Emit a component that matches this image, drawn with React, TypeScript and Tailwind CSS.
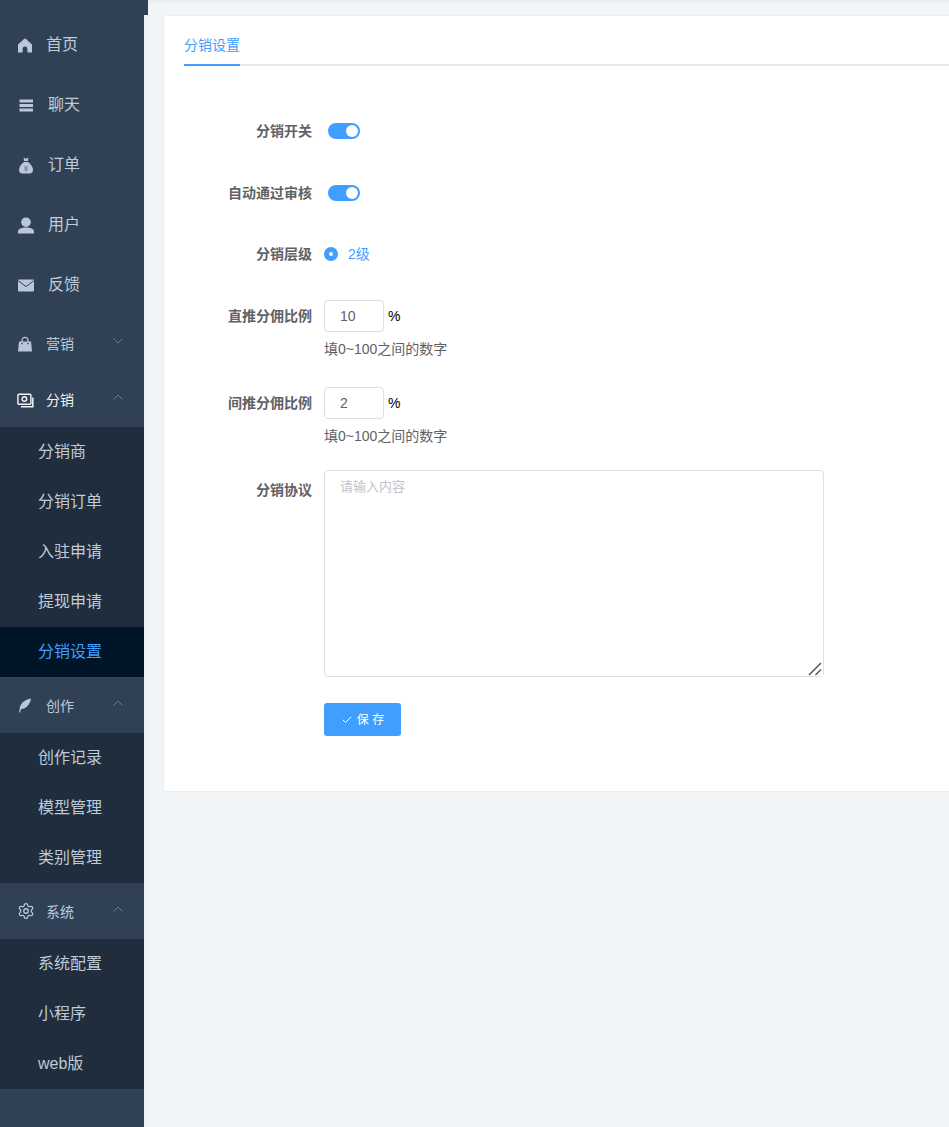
import React from 'react';
import { Check, Settings } from 'lucide-react';

const dark = '#304156';

const HomeIcon = () => (
  <svg width="17" height="17" viewBox="0 0 17 17" fill="#b9c7d8">
    <path d="M8 1.5 C8.4 1.5 8.7 1.7 9 2 L15 7.6 V15.5 H10.4 V11.8 A2.4 2.4 0 0 0 5.6 11.8 V15.5 H1 V7.6 L7 2 C7.3 1.7 7.6 1.5 8 1.5 Z" />
  </svg>
);

const ListIcon = () => (
  <svg width="17" height="17" viewBox="0 0 17 17" fill="#b9c7d8">
    <rect x="2.5" y="2.5" width="13.5" height="3" />
    <rect x="2.5" y="7" width="13.5" height="3" />
    <rect x="2.5" y="11.5" width="13.5" height="3" />
  </svg>
);

const MoneyBagIcon = () => (
  <svg width="17" height="17" viewBox="0 0 17 17" fill="#b9c7d8">
    <path d="M6.6 0.6 L9 1.8 L11.4 0.6 L11 4 H7 Z" />
    <path d="M7 5 H11 C14 7 16 10 16 13 C16 15.5 14.5 16.5 12.5 16.5 H5.5 C3.5 16.5 2 15.5 2 13 C2 10 4 7 7 5 Z" />
    <path d="M7.2 8.5 L9 10.6 L10.8 8.5 M7.2 11 H10.8 M7.2 12.8 H10.8 M9 10.6 V14.5" stroke="#6f7f92" strokeWidth="0.9" fill="none" />
  </svg>
);

const UserIcon = () => (
  <svg width="17" height="17" viewBox="0 0 17 17" fill="#b9c7d8">
    <circle cx="9" cy="5.2" r="4.8" />
    <path d="M1 16.5 V14.6 C1 11.8 5 10.6 9 10.6 C13 10.6 17 11.8 17 14.6 V16.5 Z" />
  </svg>
);

const MailIcon = () => (
  <svg width="17" height="17" viewBox="0 0 17 17">
    <rect x="1" y="2.5" width="16" height="12" rx="0.8" fill="#b9c7d8" />
    <path d="M1.2 3.6 L9 9.6 L16.8 3.6" stroke={dark} strokeWidth="1" fill="none" />
  </svg>
);

const BagIcon = () => (
  <svg width="17" height="17" viewBox="0 0 17 17">
    <path d="M2 6.5 H14 L15 16.5 H1 Z" fill="#b9c7d8" />
    <path d="M5 8.5 V5.4 A3 3 0 0 1 11 5.4 V8.5" stroke="#b9c7d8" strokeWidth="1.2" fill="none" />
    <circle cx="5" cy="8.6" r="0.8" fill={dark} />
    <circle cx="11" cy="8.6" r="0.8" fill={dark} />
  </svg>
);

const CashIcon = () => (
  <svg width="17" height="17" viewBox="0 0 17 17" fill="none" stroke="#f4f4f5" strokeWidth="1.4">
    <rect x="0.9" y="3.2" width="13" height="10" rx="1" />
    <circle cx="7.4" cy="8" r="2.3" />
    <path d="M15.8 6.5 V15.8 H4" strokeWidth="1.5" />
  </svg>
);

const FeatherIcon = () => (
  <svg width="17" height="17" viewBox="0 0 17 17" fill="#b9c7d8">
    <path d="M14 1.5 C8.5 2.5 4 5.5 3 10 L2 15.5 H3 L4.2 12 C9 12 13 7.5 14 1.5 Z" />
  </svg>
);

const GearIcon = () => (
  <div className="flex h-[17px] w-[17px] items-center justify-center">
    <Settings size={18} strokeWidth={1.7} color="#b9c7d8" className="shrink-0" />
  </div>
);

const Chevron = ({ up }: { up?: boolean }) => (
  <svg width="10" height="6" viewBox="0 0 10 6" fill="none" stroke="#6d7a8b" strokeWidth="1" className="absolute left-[113px] top-[23px]">
    <path d={up ? 'M0.5 5.5 L5 1 L9.5 5.5' : 'M0.5 0.5 L5 5 L9.5 0.5'} />
  </svg>
);

const topItems = [
  { label: '首页', icon: <HomeIcon />, gap: 'ml-[12px]' },
  { label: '聊天', icon: <ListIcon />, gap: 'ml-[14px]' },
  { label: '订单', icon: <MoneyBagIcon />, gap: 'ml-[14px]' },
  { label: '用户', icon: <UserIcon />, gap: 'ml-[14px]' },
  { label: '反馈', icon: <MailIcon />, gap: 'ml-[14px]' },
];

const groups = [
  { label: '营销', icon: <BagIcon />, children: [] as string[] },
  { label: '分销', icon: <CashIcon />, active: true, children: ['分销商', '分销订单', '入驻申请', '提现申请', '分销设置'] },
  { label: '创作', icon: <FeatherIcon />, children: ['创作记录', '模型管理', '类别管理'] },
  { label: '系统', icon: <GearIcon />, children: ['系统配置', '小程序', 'web版'] },
];

const Sidebar = () => (
  <aside className="w-[144px] shrink-0 bg-[#304156] pt-[15px] text-[#bfcbd9]">
    {topItems.map(item => (
      <div key={item.label} className="flex h-[60px] items-center pl-[17px] text-base">
        {item.icon}
        <span className={item.gap}>{item.label}</span>
      </div>
    ))}
    {groups.map(group => (
      <div key={group.label}>
        <div className="relative flex h-[56px] items-center pl-[17px] text-sm">
          {group.icon}
          <span className={`ml-[12px] translate-y-px ${group.active ? 'text-[#f4f4f5]' : ''}`}>{group.label}</span>
          <Chevron up={group.children.length > 0} />
        </div>
        {group.children.map(child => (
          <div
            key={child}
            className={`flex h-[50px] items-center pl-[38px] text-base ${child === '分销设置' ? 'bg-[#001528] text-[#409eff]' : 'bg-[#1f2d3d]'}`}
          >
            {child}
          </div>
        ))}
      </div>
    ))}
  </aside>
);

const Field = ({ label, className, labelClass = 'h-[32px] leading-[32px]', children }: { label: string; className: string; labelClass?: string; children: React.ReactNode }) => (
  <div className={`flex ${className}`}>
    <label className={`w-[148px] text-right text-sm font-bold text-[#606266] ${labelClass}`}>{label}</label>
    <div className="ml-[12px]">{children}</div>
  </div>
);

const Toggle = () => (
  <div className="flex h-[32px] items-center pl-[4px]">
    <div className="flex h-[16px] w-[32px] items-center justify-end rounded-full bg-[#409eff] pr-[2px]">
      <div className="h-[12px] w-[12px] rounded-full bg-white" />
    </div>
  </div>
);

const Percent = ({ value }: { value: string }) => (
  <div>
    <div className="flex h-[32px] items-center">
      <input
        defaultValue={value}
        className="h-[32px] w-[60px] rounded border border-[#dcdfe6] pl-[15px] text-sm text-[#606266] outline-none"
      />
      <span className="ml-[4px] text-sm text-black">%</span>
    </div>
    <div className="mt-[6px] text-sm leading-[22px] text-[#606266]">填0~100之间的数字</div>
  </div>
);

export default function App() {
  return (
    <div className="relative flex h-[1127px] overflow-hidden bg-[#f2f5f8] font-['Liberation_Sans','Noto_Sans_CJK_SC',sans-serif]">
      <Sidebar />
      <main className="relative flex-1 pl-[19px] pt-[15px]">
        <div className="absolute left-0 top-0 h-[15px] w-[4px] bg-[#304156]" />
        <div className="absolute bottom-0 left-0 top-[15px] w-[4px] bg-[#eef0f3]" />
        <div className="absolute left-[4px] right-0 top-0 h-[4px] bg-gradient-to-b from-[#e9ecf0] to-[#f2f5f8]" />
        <div className="relative h-[777px] w-[900px] border border-[#ebeef5] bg-white">
          <div className="mx-[20px] flex h-[50px] border-b-2 border-[#e4e7ed]">
            <div className="-mb-[2px] w-[56px] border-b-2 border-[#409eff] pt-[18px] text-sm leading-[22px] text-[#409eff]">分销设置</div>
          </div>
          <Field label="分销开关" className="mt-[49px]">
            <Toggle />
          </Field>
          <Field label="自动通过审核" className="mt-[30px]">
            <Toggle />
          </Field>
          <Field label="分销层级" className="mt-[29px]">
            <div className="flex h-[32px] items-center">
              <div className="flex h-[14px] w-[14px] items-center justify-center rounded-full bg-[#409eff]">
                <div className="h-[4px] w-[4px] rounded-full bg-white" />
              </div>
              <span className="ml-[10px] text-sm text-[#409eff]">2级</span>
            </div>
          </Field>
          <Field label="直推分佣比例" className="mt-[30px]">
            <Percent value="10" />
          </Field>
          <Field label="间推分佣比例" className="mt-[27px]">
            <Percent value="2" />
          </Field>
          <Field label="分销协议" className="mt-[23px]" labelClass="h-[32px] pt-[4px] leading-[32px]">
            <div className="relative">
              <textarea
                placeholder="请输入内容"
                className="block h-[207px] w-[500px] rounded border border-[#dcdfe6] px-[15px] py-[5px] text-sm leading-[21px] text-[#606266] outline-none placeholder:text-[13px] placeholder:text-[#c0c4cc]"
              />
              <svg width="15" height="15" viewBox="0 0 15 15" stroke="#555" strokeWidth="1.5" className="pointer-events-none absolute bottom-[1px] right-[1px] bg-white">
                <path d="M1 14 L13 2 M7.5 14 L13 8.5" />
              </svg>
            </div>
          </Field>
          <div className="ml-[160px] mt-[26px] flex h-[33px] w-[77px] items-center justify-center rounded-[3px] bg-[#409eff] text-xs text-white">
            <Check size={12} strokeWidth={2} />
            <span className="ml-[4px]">保 存</span>
          </div>
        </div>
      </main>
    </div>
  );
}
